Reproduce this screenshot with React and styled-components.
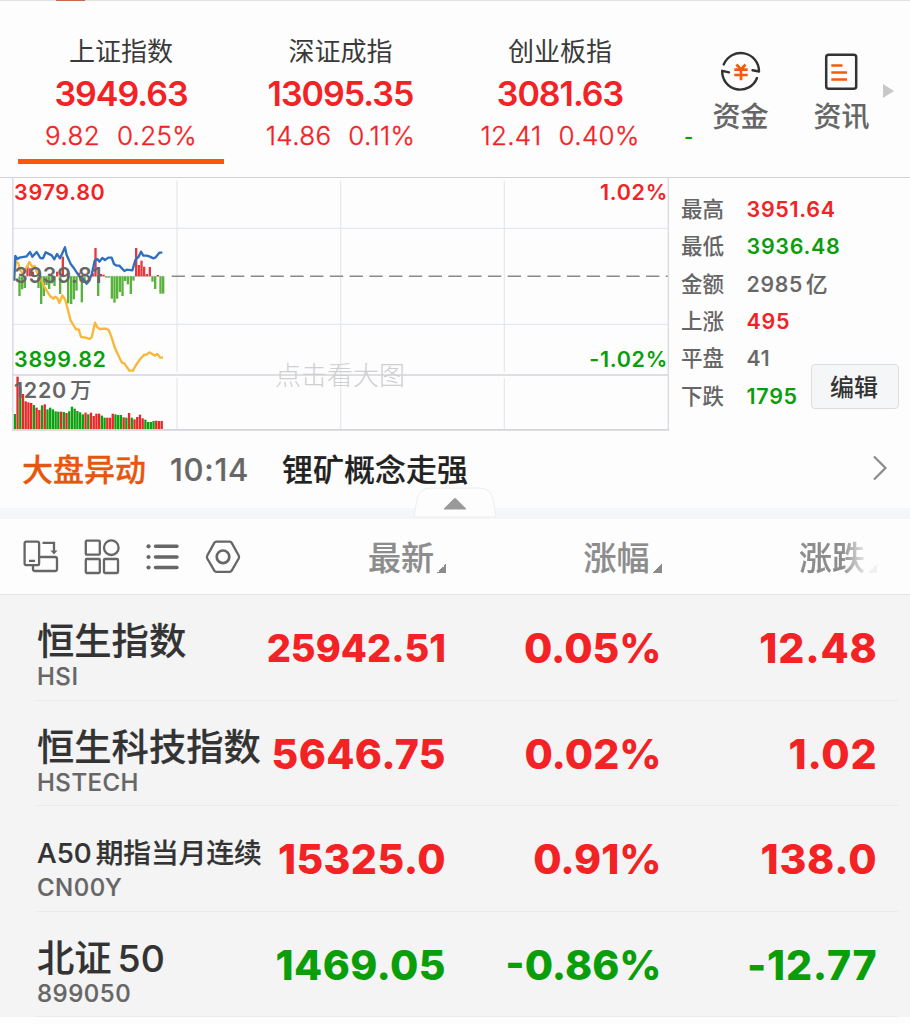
import styled, { createGlobalStyle } from "styled-components";

const RED = "#f32224";
const GREEN = "#0a9e0a";
const GRAY = "#666";

const indexes = [
  { id: 1, name: "上证指数", value: "3949.63", change: "9.82", percent: "0.25%", active: true },
  { id: 2, name: "深证成指", value: "13095.35", change: "14.86", percent: "0.11%" },
  { id: 3, name: "创业板指", value: "3081.63", change: "12.41", percent: "0.40%" },
];

const stats = [
  { label: "最高", value: "3951.64", color: RED },
  { label: "最低", value: "3936.48", color: GREEN },
  { label: "金额", value: "2985", unit: "亿", color: GRAY },
  { label: "上涨", value: "495", color: RED },
  { label: "平盘", value: "41", color: GRAY },
  { label: "下跌", value: "1795", color: GREEN },
];

const quotes = [
  { name: "恒生指数", code: "HSI", last: "25942.51", lastSize: 38, percent: "0.05%", change: "12.48", color: RED },
  { name: "恒生科技指数", code: "HSTECH", last: "5646.75", percent: "0.02%", change: "1.02", color: RED },
  { name: "A50", rest: "期指当月连续", small: true, code: "CN00Y", last: "15325.0", percent: "0.91%", change: "138.0", color: RED },
  { name: "北证", rest: "50", code: "899050", last: "1469.05", percent: "-0.86%", change: "-12.77", color: GREEN },
];

// chart data: plot is 1971 x 762 units, 3 units for a pixel
const bluePoints =
  "42,332 46,258 52,267 58,263 80,259 90,246 97,260 110,246 121,264 129,265 137,247 155,256 163,268 171,252 180,265 195,232 200,255 212,282 222,295 232,310 240,322 250,328 260,341 268,332 276,310 284,272 292,267 298,275 307,264 315,270 325,263 335,263 342,282 350,287 358,287 373,303 380,299 397,301 406,270 416,260 423,245 430,257 440,257 450,260 460,265 467,262 478,248 487,248";
const yellowPoints =
  "42,332 48,274 55,280 60,300 70,312 78,295 88,276 96,290 104,288 112,310 122,325 130,345 140,362 150,378 160,386 165,380 172,384 178,399 187,376 196,390 203,417 212,452 222,468 228,478 236,478 243,501 258,503 268,507 275,502 279,485 285,458 292,472 299,477 318,476 326,480 334,500 345,535 365,577 373,580 388,602 399,602 408,585 420,568 432,555 441,553 448,547 465,557 472,552 481,563 489,563";
const flow = [
  [58, 378], [66, 358], [74, 354], [82, 290], [90, 295], [98, 305], [115, 354], [123, 402], [131, 378],
  [139, 345], [147, 357], [155, 340], [163, 348], [171, 305], [180, 372], [188, 260], [204, 400],
  [213, 402], [221, 388], [229, 362], [237, 308], [245, 397], [253, 335], [278, 310], [286, 234], [294, 378],
  [302, 312], [310, 314], [318, 323], [326, 323], [335, 386], [343, 398], [351, 386], [359, 366], [367, 378],
  [375, 333], [383, 343], [392, 372], [400, 332], [408, 234], [416, 285], [424, 272], [432, 290], [440, 312],
  [449, 291], [457, 335], [465, 357], [473, 315], [481, 371], [489, 371],
];
const volume =
  "g342 r230 g262 r282 r304 r307 r309 g315 r323 r330 g316 r313 g328 g323 g328 g334 g335 r335 g336 r339 g334 g320 g326 g333 g337 g343 r338 g343 r338 r348 r341 r341 g347 g353 r353 r353 r341 g343 g345 g345 r352 g353 r339 g353 r358 r351 r344 r355 g359 g366 g366 g363 r362 r363 r363".split(" ");

const Chart = () => (
  <ChartBox>
    <ChartSvg viewBox="0 0 1971 762">
      <g transform="translate(-36 -21)">
        <g stroke="#e6e9ee" strokeWidth="4">
          <path d="M38 175H2005M38 463H2005" />
          <path d="M531 32V606M1022 32V606M1513 32V606M531 624V780M1022 606V780M1513 624V780" />
        </g>
        <path d="M38 615H2005" stroke="#d3d5da" strokeWidth="5" />
        <path d="M515 319H2005" stroke="#8a8a8a" strokeWidth="4.500" strokeDasharray="40 19.3" />
        <path d="M102 319H492" stroke="#bbb" strokeWidth="2" />
        {flow.map(([x, y]) => (
          <rect
            key={x}
            x={x - 3}
            width="7"
            y={Math.min(y, 319)}
            height={Math.abs(y - 319)}
            fill={y < 319 ? "#e23b3f" : "#57b33c"}
          />
        ))}
        <polyline points={yellowPoints} fill="none" stroke="#f8b736" strokeWidth="7" strokeLinejoin="round" />
        <polyline points={bluePoints} fill="none" stroke="#2f6fc0" strokeWidth="7" strokeLinejoin="round" />
        {volume.map((v, i) => (
          <rect
            key={i}
            x={41 + i * 8.16}
            width="7"
            y={Number(v.slice(1)) + 390}
            height={388 - Number(v.slice(1))}
            fill={v[0] === "r" ? "#e8282b" : "#0fa011"}
          />
        ))}
        <path d="M38.500 21V780" stroke="#d3d8e2" strokeWidth="4" />
        <path d="M2005 21V780" stroke="#d9dbe0" strokeWidth="4" />
        <path d="M36 779.500H2007" stroke="#d3d5da" strokeWidth="5" />
      </g>
    </ChartSvg>
    <ChartLabel $top={3} $color={RED}>3979.80</ChartLabel>
    <ChartLabel $top={86} $color={GRAY}>3939.81</ChartLabel>
    <ChartLabel $top={170} $color={GREEN}>3899.82</ChartLabel>
    <ChartLabel $top={201} $color={GRAY}>1220<Unit>万</Unit></ChartLabel>
    <ChartLabel $top={3} $color={RED} $right>1.02%</ChartLabel>
    <ChartLabel $top={170} $color={GREEN} $right>-1.02%</ChartLabel>
    <Watermark>点击看大图</Watermark>
  </ChartBox>
);

const FundIcon = () => (
  <svg width="42" height="42" viewBox="0 0 42 42" fill="none">
    <g stroke="#333" strokeWidth="2.400" strokeLinejoin="round" strokeLinecap="round">
      <path d="M3.700 14.500A18.300 18.300 0 0 1 39 21.500L32.500 20.200" />
      <path d="M37 28A18 18 0 0 1 2.200 20.800L9 22.300" />
    </g>
    <path d="M16.500 14.500L21 19.500L25.500 14.500M14.300 19.700H27.700M14.300 25H27.700M21 19.500V30.300" stroke="#f95a0a" strokeWidth="2.700" />
  </svg>
);

const NewsIcon = () => (
  <svg width="36" height="42" viewBox="0 0 36 42" fill="none">
    <rect x="2.200" y="4.700" width="30" height="34" rx="2.500" stroke="#333" strokeWidth="2.500" />
    <path d="M7.300 15.500H18.500M7.300 22.500H23M7.300 29.500H23" stroke="#f95a0a" strokeWidth="2.700" />
  </svg>
);

const ToolIcons = () => (
  <Tools>
    <svg width="36" height="36" viewBox="0 0 36 36">
      <rect x="1.600" y="2.700" width="14.500" height="23.500" rx="1.800" />
      <path d="M16.500 18H32a2 2 0 0 1 2 2V30a2 2 0 0 1-2 2H12a2 2 0 0 1-2-2V26.500M6 21.800H12M19.500 3.800H31V13" />
      <path d="M27.500 11.500H34.500L31 15.500Z" fill={GRAY} stroke="none" />
    </svg>
    <svg width="36" height="36" viewBox="0 0 36 36">
      <rect x="1.800" y="1.700" width="14" height="14" rx="1" />
      <circle cx="27.300" cy="8.700" r="7.300" />
      <rect x="1.800" y="20" width="14" height="14" rx="1" />
      <rect x="20" y="20" width="14" height="14" rx="1" />
    </svg>
    <svg width="36" height="36" viewBox="0 0 36 36">
      <path d="M11.500 7.300H33M11.500 18H33M11.500 28.500H33" strokeWidth="3.500" strokeLinecap="round" />
      <g fill={GRAY} stroke="none">
        <circle cx="4.500" cy="7.300" r="2.100" />
        <circle cx="4.500" cy="18" r="2.100" />
        <circle cx="4.500" cy="28.500" r="2.100" />
      </g>
    </svg>
    <svg width="36" height="36" viewBox="0 0 36 36">
      <path d="M11.300 2.700H24.700Q26 2.700 26.700 3.900L33.700 16.500Q34.500 18 33.700 19.500L26.700 31.600Q26 32.800 24.700 32.800H11.300Q10 32.800 9.300 31.600L2.300 19.500Q1.500 18 2.300 16.500L9.300 3.900Q10 2.700 11.300 2.700Z" />
      <circle cx="18" cy="17.800" r="6.300" strokeWidth="2.700" />
    </svg>
  </Tools>
);

const App = () => {
  return (
    <Page>
      <GlobalStyle />
      <TopLine>
        <TopMark />
      </TopLine>
      <Header>
        {indexes.map((d) => (
          <IndexCard key={d.id} $active={d.active}>
            <IndexName>{d.name}</IndexName>
            <IndexValue>{d.value}</IndexValue>
            <IndexChange>
              <span>{d.change}</span>
              <span>{d.percent}</span>
            </IndexChange>
          </IndexCard>
        ))}
        <NextCard>-</NextCard>
        <Action>
          <FundIcon />
          <ActionTitle>资金</ActionTitle>
        </Action>
        <Action>
          <NewsIcon />
          <ActionTitle>资讯</ActionTitle>
        </Action>
        <MoreArrow />
      </Header>
      <Market>
        <Chart />
        <Stats>
          {stats.map((s) => (
            <StatRow key={s.label}>
              <StatLabel>{s.label}</StatLabel>
              <StatValue $color={s.color}>
                {s.value}
                {s.unit && <Unit>{s.unit}</Unit>}
              </StatValue>
            </StatRow>
          ))}
        </Stats>
        <EditButton>编辑</EditButton>
      </Market>
      <News>
        <NewsTag>大盘异动</NewsTag>
        <NewsTime>10:14</NewsTime>
        <NewsTitle>锂矿概念走强</NewsTitle>
        <svg width="16" height="28" viewBox="0 0 16 28" fill="none">
          <path d="M2 1.500L13.500 13L2 24.500" stroke="#8c8c8c" strokeWidth="2.200" />
        </svg>
      </News>
      <Divider>
        <Collapse width="84" height="31" viewBox="0 0 84 31">
          <path d="M1 30L4 12Q6.500 1 18 1H66Q77.500 1 80 12L83 30Z" fill="#fdfdfd" stroke="#ededef" />
          <path d="M31 21.500L41 11.500Q42 10.600 43 11.500L53 21.500Q53.500 22.500 52 22.500H32Q30.500 22.500 31 21.500Z" fill="#999" />
        </Collapse>
      </Divider>
      <TableHead>
        <ToolIcons />
        <HeadCell>最新<SortMark /></HeadCell>
        <HeadCell>涨幅<SortMark /></HeadCell>
        <HeadCell $fade>涨跌<SortMark /></HeadCell>
      </TableHead>
      <Table>
        {quotes.map((q) => (
          <Row key={q.code}>
            <NameCell>
              <Name $small={q.small}>
                <span>{q.name}</span>
                {q.rest && <span>{q.rest}</span>}
              </Name>
              <Code>{q.code}</Code>
            </NameCell>
            <Num $color={q.color} $size={q.lastSize} $space={q.lastSize ? 0 : 0.4}>{q.last}</Num>
            <Num $color={q.color}>{q.percent}</Num>
            <Num $color={q.color} $space={0.8}>{q.change}</Num>
          </Row>
        ))}
      </Table>
    </Page>
  );
};

export default App;

const GlobalStyle = createGlobalStyle`
  * {
    box-sizing: border-box;
  }
  body {
    margin: 0;
    background: #fdfdfd;
    font-family: Inter, "Noto Sans CJK SC", sans-serif;
  }
  svg {
    display: block;
    flex-shrink: 0;
  }
`;

const Page = styled.div`
  width: 910px;
  height: 1024px;
  overflow: hidden;
  background: #fdfdfd;
`;

const TopLine = styled.div`
  height: 1px;
  padding-left: 56px;
  background: #e2e2e2;
`;
const TopMark = styled.div`
  width: 29px;
  height: 1px;
  background: #c8694d;
`;

const Header = styled.div`
  display: flex;
  height: 176px;
  padding-left: 18px;
`;

const IndexCard = styled.div`
  width: 206px;
  height: 163px;
  margin-right: 13.5px;
  padding-top: 31px;
  text-align: center;
  white-space: nowrap;
  border-bottom: 5px solid ${(p) => (p.$active ? "#f95a0a" : "transparent")};
`;
const IndexName = styled.div`
  font-size: 26px;
  line-height: 40px;
  color: #3a3a3a;
`;
const IndexValue = styled.div`
  font-size: 34px;
  font-weight: 600;
  line-height: 44px;
  letter-spacing: -1px;
  color: ${RED};
`;
const IndexChange = styled.div`
  display: flex;
  justify-content: center;
  gap: 17px;
  font-size: 26px;
  line-height: 39px;
  font-weight: 300;
  letter-spacing: 0.3px;
  -webkit-text-stroke: 0.3px;
  color: ${RED};
`;

const NextCard = styled.div`
  width: 25px;
  padding: 116px 0 0 7.500px;
  font-size: 20px;
  font-weight: 600;
  line-height: 40px;
  color: ${GREEN};
`;

const Action = styled.div`
  display: flex;
  flex-direction: column;
  align-items: center;
  width: 78px;
  margin-right: 23px;
  padding-top: 49px;
`;
const ActionTitle = styled.div`
  font-size: 28px;
  line-height: 40px;
  margin-top: 5px;
  font-weight: 500;
  color: ${GRAY};
  -webkit-text-stroke: 0.15px;
  white-space: nowrap;
`;
const MoreArrow = styled.div`
  width: 0;
  height: 0;
  margin: 83px 0 0 -21px;
  border: 7px solid transparent;
  border-left: 11px solid #c8c8c8;
  border-right: 0;
`;

const Market = styled.div`
  display: flex;
  height: 254px;
  padding-left: 12px;
  border-top: 1px solid #d2d2d4;
`;

const ChartBox = styled.div`
  position: relative;
  width: 657px;
  height: 254px;
  margin-top: -1px;
  flex-shrink: 0;
`;
const ChartSvg = styled.svg`
  width: 657px;
  height: 254px;
`;
const ChartLabel = styled.div`
  position: absolute;
  top: ${(p) => p.$top}px;
  ${(p) => (p.$right ? "right: 1px;" : "left: 2px;")}
  font-size: 21.5px;
  line-height: 25px;
  font-weight: 600;
  letter-spacing: 0.7px;
  color: ${(p) => p.$color};
`;
const Unit = styled.span`
  margin-left: 3px;
  font-weight: 500;
`;
const Watermark = styled.div`
  position: absolute;
  left: 263px;
  top: 179px;
  font-size: 26px;
  line-height: 40px;
  font-weight: 300;
  color: #cfcfd1;
`;

const Stats = styled.div`
  width: 142px;
  flex-shrink: 0;
  padding: 13px 0 0 12px;
`;
const StatRow = styled.div`
  display: flex;
  height: 37.350px;
  line-height: 37.350px;
  font-size: 21.5px;
  white-space: nowrap;
`;
const StatLabel = styled.div`
  width: 65.500px;
  flex-shrink: 0;
  font-weight: 500;
  color: ${GRAY};
`;
const StatValue = styled.div`
  font-weight: ${(p) => (p.$color === GRAY ? 500 : 600)};
  letter-spacing: 0.7px;
  color: ${(p) => p.$color};
  -webkit-text-stroke: ${(p) => (p.$color === GRAY ? 0.2 : 0)}px;
`;
const EditButton = styled.button`
  width: 88px;
  height: 45px;
  flex-shrink: 0;
  margin-top: 186px;
  padding: 0 2px 2px 0;
  border: 1.500px solid #dddee0;
  border-radius: 4px;
  background: #f5f6f8;
  font-family: inherit;
  font-size: 24px;
  font-weight: 500;
  color: #333;
`;

const News = styled.div`
  display: flex;
  align-items: center;
  height: 77px;
  padding: 0 22px 1px 22px;
  font-size: 31px;
  line-height: 45px;
  svg {
    margin-left: auto;
  }
`;
const NewsTag = styled.div`
  width: 148px;
  font-weight: 500;
  color: #e8560d;
  -webkit-text-stroke: 0.3px;
`;
const NewsTime = styled.div`
  width: 112px;
  font-weight: 500;
  letter-spacing: 0.7px;
  color: ${GRAY};
  -webkit-text-stroke: 0.2px;
`;
const NewsTitle = styled.div`
  font-weight: 500;
  color: #222;
  -webkit-text-stroke: 0.2px;
`;

const Divider = styled.div`
  position: relative;
  height: 11px;
  background: #f5f6f8;
`;
const Collapse = styled.svg`
  position: absolute;
  left: 413px;
  top: -21px;
`;

const TableHead = styled.div`
  display: grid;
  grid-template-columns: 230.500px 215.500px 215.500px 215.500px;
  align-items: center;
  height: 76px;
  border-bottom: 1px solid #e6e6e6;
`;
const Tools = styled.div`
  display: flex;
  gap: 24.700px;
  padding-left: 23px;
  svg {
    fill: none;
    stroke: ${GRAY};
    stroke-width: 2.300;
  }
`;
const HeadCell = styled.div`
  display: flex;
  justify-content: flex-end;
  align-items: flex-end;
  padding-top: 2px;
  font-size: 33px;
  line-height: 46px;
  font-weight: 500;
  color: #8c8c8c;
  -webkit-text-stroke: 0.2px;
  ${(p) => p.$fade && "mask-image: linear-gradient(to right, #000 180px, rgba(0, 0, 0, 0.1) 206px);"}
`;
const SortMark = styled.div`
  width: 9px;
  height: 9px;
  margin: 0 0 8px 3px;
  background: linear-gradient(135deg, transparent 50%, #8c8c8c 50%);
`;

const Table = styled.div`
  background: #f4f4f4;
`;
const Row = styled.div`
  display: grid;
  grid-template-columns: 225px 184px 215.500px 216px;
  height: 105.500px;
  margin: 0 12px 0 36px;
  padding-left: 1px;
  border-bottom: 1px solid #ebebec;
  white-space: nowrap;
`;
const NameCell = styled.div`
  padding-top: 23px;
`;
const Name = styled.div`
  display: flex;
  gap: ${(p) => (p.$small ? 4 : 6)}px;
  font-size: ${(p) => (p.$small ? 27.700 : 37.300)}px;
  line-height: 48px;
  font-weight: 500;
  color: #333;
  -webkit-text-stroke: 0.2px;
`;
const Code = styled.div`
  font-size: 24px;
  line-height: 22px;
  font-weight: 500;
  letter-spacing: 0.5px;
  color: ${GRAY};
  -webkit-text-stroke: 0.2px;
`;
const Num = styled.div`
  font-size: ${(p) => p.$size || 41}px;
  line-height: 106px;
  font-weight: 800;
  text-align: right;
  letter-spacing: ${(p) => p.$space || 0}px;
  color: ${(p) => p.$color};
`;
